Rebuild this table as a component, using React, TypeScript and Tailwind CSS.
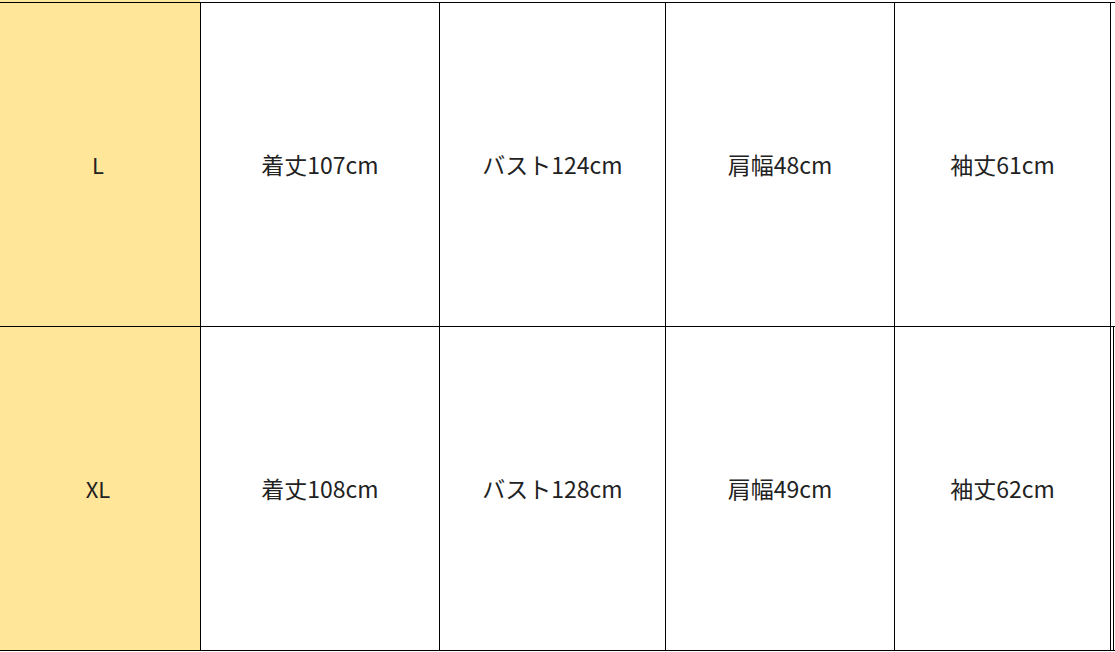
import React from "react";

const rows = [
  { size: "L", cells: ["着丈107cm", "バスト124cm", "肩幅48cm", "袖丈61cm"] },
  { size: "XL", cells: ["着丈108cm", "バスト128cm", "肩幅49cm", "袖丈62cm"] },
];

export default function App() {
  return (
    <div
      className="w-[1115px] h-[652px] bg-white overflow-hidden text-[#222222]"
      style={{ fontFamily: '"Noto Sans CJK JP", "Noto Sans", sans-serif' }}
    >
      <div className="h-[2px] w-[200px] bg-[#ffe699]" />
      {rows.map((row, i) => (
        <div
          key={row.size}
          className={`flex border-t border-black ${i === 1 ? "h-[325px] border-b" : "h-[324px]"}`}
        >
          <div className="w-[201px] shrink-0 bg-[#ffe699] border-r border-black flex items-center justify-center pr-1 text-[22px]">
            {row.size}
          </div>
          <div className="w-[239px] shrink-0 border-r border-black flex items-center justify-center text-[23px]">
            {row.cells[0]}
          </div>
          <div className="w-[226px] shrink-0 border-r border-black flex items-center justify-center text-[23px]">
            {row.cells[1]}
          </div>
          <div className="w-[229px] shrink-0 border-r border-black flex items-center justify-center text-[23px]">
            {row.cells[2]}
          </div>
          <div
            className={`shrink-0 border-black flex items-center justify-center text-[23px] ${
              i === 1 ? "w-[219px] border-r-4 border-double" : "w-[216px] border-r"
            }`}
          >
            {row.cells[3]}
          </div>
        </div>
      ))}
    </div>
  );
}
